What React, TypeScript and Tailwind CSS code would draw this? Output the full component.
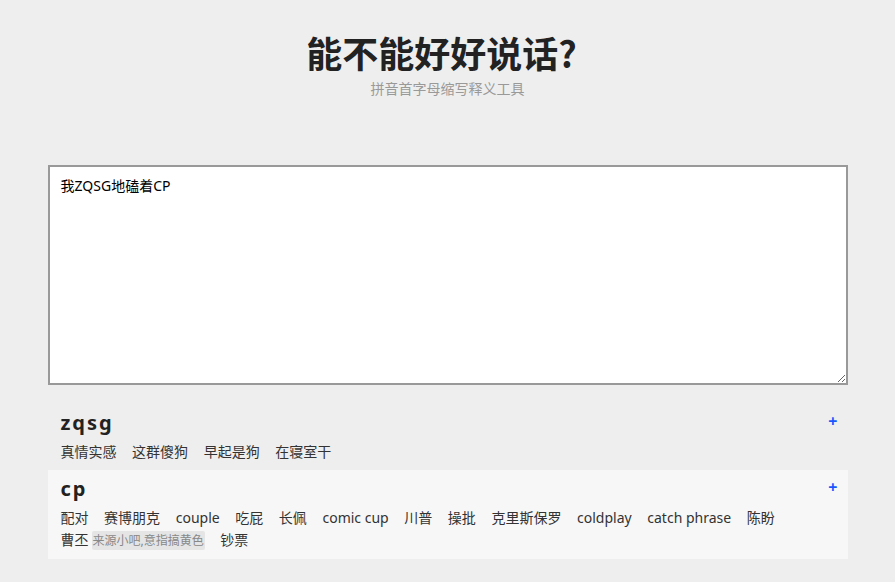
import React from "react";

type Tag = { text: string; note?: string };
type Result = { name: string; tags: Tag[] };

const results: Result[] = [
  {
    name: "zqsg",
    tags: [
      { text: "真情实感" },
      { text: "这群傻狗" },
      { text: "早起是狗" },
      { text: "在寝室干" },
    ],
  },
  {
    name: "cp",
    tags: [
      { text: "配对" },
      { text: "赛博朋克" },
      { text: "couple" },
      { text: "吃屁" },
      { text: "长佩" },
      { text: "comic cup" },
      { text: "川普" },
      { text: "操批" },
      { text: "克里斯保罗" },
      { text: "coldplay" },
      { text: "catch phrase" },
      { text: "陈盼" },
      { text: "曹丕", note: "来源小吧,意指搞黄色" },
      { text: "钞票" },
    ],
  },
];

export default function App() {
  return (
    <div
      className="min-h-[582px] bg-[#eeeeee] text-[#333]"
      style={{ fontFamily: '"Noto Sans", "Noto Sans CJK SC", sans-serif' }}
    >
      <div className="mx-auto w-[800px] pt-[26px] pb-[24px]">
        <div className="text-center">
          <h1
            className="text-[36px] font-bold leading-[52px] text-[#222] pr-[12px]"
            style={{ fontFamily: '"Noto Sans CJK SC", sans-serif' }}
          >
            能不能好好说话?
          </h1>
          <p className="text-[14px] leading-[22px] text-[#999]">
            拼音首字母缩写释义工具
          </p>
        </div>

        <textarea
          defaultValue="我ZQSG地磕着CP"
          className="mt-[65px] block h-[220px] w-[800px] resize-y border-2 border-[#999] bg-white px-[11px] py-[9px] text-[14px] leading-[20px] text-black outline-none"
        />

        <div className="mt-[19px] flex flex-col">
          {results.map((r, i) => (
            <div
              key={r.name}
              className={`relative px-[13px] pt-[4px] pb-[7px] ${
                i === 1 ? "bg-[#f7f7f7]" : ""
              }`}
            >
              <div className="mb-[3px] text-[20px] font-bold leading-[30px] tracking-[2px] text-[#222]">
                {r.name}
              </div>
              <span className="absolute right-[10px] top-[7px] text-[16px] font-bold leading-[20px] text-[#1a56ff]">
                +
              </span>
              <div className="flex flex-wrap text-[14px] leading-[22px]">
                {r.tags.map((t) => (
                  <span key={t.text} className="mr-[15.6px] whitespace-nowrap">
                    {t.text}
                    {t.note && (
                      <span className="ml-[3px] rounded-[2px] bg-[#e5e5e5] px-[1px] py-[1px] text-[12px] text-[#888]">
                        {t.note}
                      </span>
                    )}
                  </span>
                ))}
              </div>
            </div>
          ))}
        </div>
      </div>
    </div>
  );
}
